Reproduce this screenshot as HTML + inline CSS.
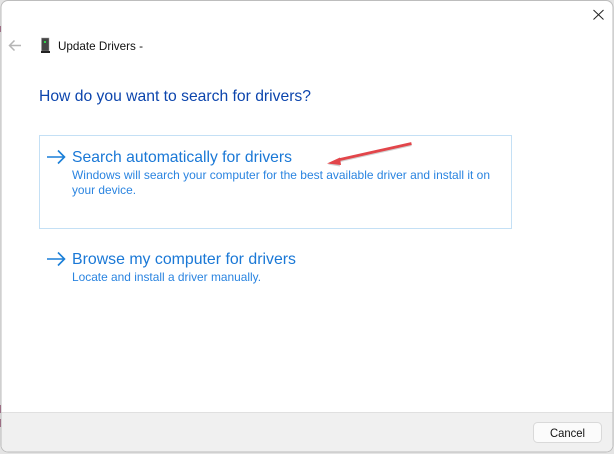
<!DOCTYPE html>
<html><head><meta charset="utf-8"><style>
html,body{margin:0;padding:0;width:614px;height:454px;overflow:hidden;background:#fff}
svg{display:block}
text{font-family:"Liberation Sans",sans-serif}
</style></head><body>
<svg width="614" height="454" viewBox="0 0 614 454" xmlns="http://www.w3.org/2000/svg">
<rect width="614" height="454" fill="#e4e4e4"/>
<rect x="0" y="26" width="1" height="6" fill="#7a1f4a"/>
<rect x="0" y="405" width="1" height="8" fill="#7a1f4a"/>
<rect x="0" y="419" width="1" height="8" fill="#7a1f4a"/>
<path d="M8 .5H606a7 7 0 0 1 7 7V445a7 7 0 0 1-7 7H8a7 7 0 0 1-7-7V7.500a7 7 0 0 1 7-7z" fill="#fff" stroke="#bdbdbd"/>
<path d="M1.500 413H612.500V445a6.500 6.500 0 0 1-6.500 6.500H8a6.500 6.500 0 0 1-6.500-6.500z" fill="#f0f0f0"/>
<rect x="1.500" y="412" width="611" height="1" fill="#e0e0e0"/>
<path d="M593.500 10l10 9.500M603.500 10l-10 9.500" stroke="#222" stroke-width="1" fill="none"/>
<path d="M21 45.500H10M14.500 40.500l-5 5 5 5" stroke="#b5b5b5" stroke-width="1.500" fill="none"/>
<rect x="41.500" y="38" width="7.500" height="13" fill="#454545" stroke="#9a9a9a" stroke-width=".5"/>
<rect x="41" y="51" width="9" height="2" fill="#222"/>
<rect x="44" y="41" width="2" height="2" fill="#2fd24a"/>
<text x="58" y="50" font-size="12" fill="#111" textLength="85" lengthAdjust="spacingAndGlyphs">Update Drivers -</text>
<text x="39" y="101" font-size="16" fill="#0c45ad" textLength="272" lengthAdjust="spacingAndGlyphs">How do you want to search for drivers?</text>
<rect x="39.500" y="135.500" width="472" height="93" fill="none" stroke="#c4e0f5"/>
<path d="M47 157H64.500M58 150.500l6.500 6.500-6.500 6.500" stroke="#1a7fd8" stroke-width="1.600" fill="none"/>
<text x="72" y="162" font-size="16" fill="#1a78d6" textLength="220" lengthAdjust="spacingAndGlyphs">Search automatically for drivers</text>
<text x="72" y="179" font-size="12" fill="#2a84e0" textLength="418" lengthAdjust="spacingAndGlyphs">Windows will search your computer for the best available driver and install it on</text>
<text x="72" y="194" font-size="12" fill="#2a84e0" textLength="64" lengthAdjust="spacingAndGlyphs">your device.</text>
<path d="M47 259H64.500M58 252.500l6.500 6.500-6.500 6.500" stroke="#1a7fd8" stroke-width="1.600" fill="none"/>
<text x="72" y="264" font-size="16" fill="#1a78d6" textLength="224" lengthAdjust="spacingAndGlyphs">Browse my computer for drivers</text>
<text x="72" y="281" font-size="12" fill="#2a84e0" textLength="189" lengthAdjust="spacingAndGlyphs">Locate and install a driver manually.</text>
<path d="M411.500 145L340 161" stroke="#999" stroke-width="2" fill="none" opacity=".45"/>
<path d="M328 164.500L340 166.500L339 159z" fill="#999" opacity=".45"/>
<path d="M411.500 143.500L340 159.500" stroke="#e2454a" stroke-width="2.800" fill="none"/>
<path d="M327 163.500L340 157.500L341 165z" fill="#e2454a"/>
<rect x="533.500" y="422.500" width="68" height="20" rx="4" fill="#fbfbfb" stroke="#d9d9d9"/>
<text x="550" y="437" font-size="12" fill="#111" textLength="35" lengthAdjust="spacingAndGlyphs">Cancel</text>
</svg>
</body></html>
